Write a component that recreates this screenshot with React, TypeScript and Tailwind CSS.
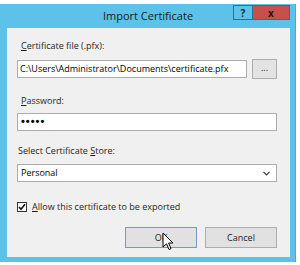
import React from "react";

const font = { fontFamily: '"Open Sans", "Noto Sans", sans-serif' };

function U({ children }: { children: React.ReactNode }) {
  return <span className="underline underline-offset-[1px]">{children}</span>;
}

export default function App() {
  return (
    <div className="relative w-[300px] h-[265px] bg-white overflow-hidden text-[#1e1e1e]" style={font}>
      <div className="h-[4px]" />
      <div className="w-[296px] h-[258px] bg-[#5cc2ea] border-r border-[#7e97a6] flex flex-col">
        {/* Title bar */}
        <div className="h-[24px] grid grid-cols-[1fr_auto_1fr]">
          <div />
          <div className="text-[11px] leading-[24px] text-[#1a1a1a] pl-[1px]">Import Certificate</div>
          <div className="flex justify-end items-start pt-[1px] pr-[5px]">
            <div className="w-[20px] h-[15px] border border-[#2f6f96] bg-[#5cc2ea] flex items-center justify-center text-[10px] font-bold leading-none text-[#1b2b3a]">?</div>
            <div className="w-[37px] h-[15px] border border-l-0 border-[#2f6f96] bg-[#c7504a] flex items-center justify-center text-[10px] font-bold leading-none text-[#2a1414]">x</div>
          </div>
        </div>
        {/* Client */}
        <div className="ml-[7px] mr-[5px] h-[229px] bg-[#f0f0f0] flex flex-col pl-[10px] pr-[13px] text-[9px]">
          <div className="mt-[12px] h-[12px] leading-[12px] pl-[4px]"><U>C</U>ertificate file (.pfx):</div>
          <div className="mt-[7px] flex items-center gap-[5px]">
            <div className="w-[230px] h-[18px] bg-white border border-[#acacac] pl-[2px] leading-[16px] text-black whitespace-nowrap overflow-hidden">C:\Users\Administrator\Documents\certificate.pfx</div>
            <div className="w-[25px] h-[20px] bg-[#e3e3e3] border border-[#adadad] flex items-center justify-center text-[9px] leading-none pb-[3px]">...</div>
          </div>
          <div className="mt-[16px] h-[12px] leading-[12px] pl-[4px]"><U>P</U>assword:</div>
          <div className="mt-[6px] h-[18px] bg-white border border-[#acacac] pl-[3px] leading-[15px] text-black text-[11px] font-bold tracking-[1px]" style={{ fontFamily: '"Liberation Sans", sans-serif' }}>•••••</div>
          <div className="mt-[14px] h-[12px] leading-[12px] pl-[1px]">Select Certificate <U>S</U>tore:</div>
          <div className="mt-[7px] h-[18px] bg-white border border-[#acacac] pl-[3px] pr-[6px] flex items-center justify-between text-black">
            <span className="leading-[16px]">Personal</span>
            <svg width="7" height="5" viewBox="0 0 7 5"><path d="M0.5 0.8 L3.5 3.8 L6.5 0.8" fill="none" stroke="#333" strokeWidth="1.2" /></svg>
          </div>
          <div className="mt-[19px] flex items-center gap-[5px] h-[12px]">
            <div className="w-[10px] h-[10px] bg-white border border-[#333] flex items-center justify-center">
              <svg width="8" height="8" viewBox="0 0 8 8"><path d="M1 4 L3 6.2 L7 1.2" fill="none" stroke="#111" strokeWidth="1.6" /></svg>
            </div>
            <span className="leading-[12px]"><U>A</U>llow this certificate to be exported</span>
          </div>
          <div className="mt-[14px] flex justify-end gap-[8px]">
            <div className="w-[72px] h-[21px] bg-[#e1e1e1] border border-[#6f9bd1] flex items-center justify-center text-[9px] leading-none">OK</div>
            <div className="w-[72px] h-[21px] bg-[#e1e1e1] border border-[#adadad] flex items-center justify-center text-[9px] leading-none">Cancel</div>
          </div>
        </div>
      </div>
      {/* mouse cursor overlay */}
      <svg className="absolute left-[162px] top-[232px]" width="13" height="20" viewBox="0 0 13 20">
        <path d="M1 1 L1 15 L4.5 11.8 L7 17.5 L9 16.6 L6.6 11 L11 11 Z" fill="#fff" stroke="#000" strokeWidth="1" strokeLinejoin="round" />
      </svg>
    </div>
  );
}
